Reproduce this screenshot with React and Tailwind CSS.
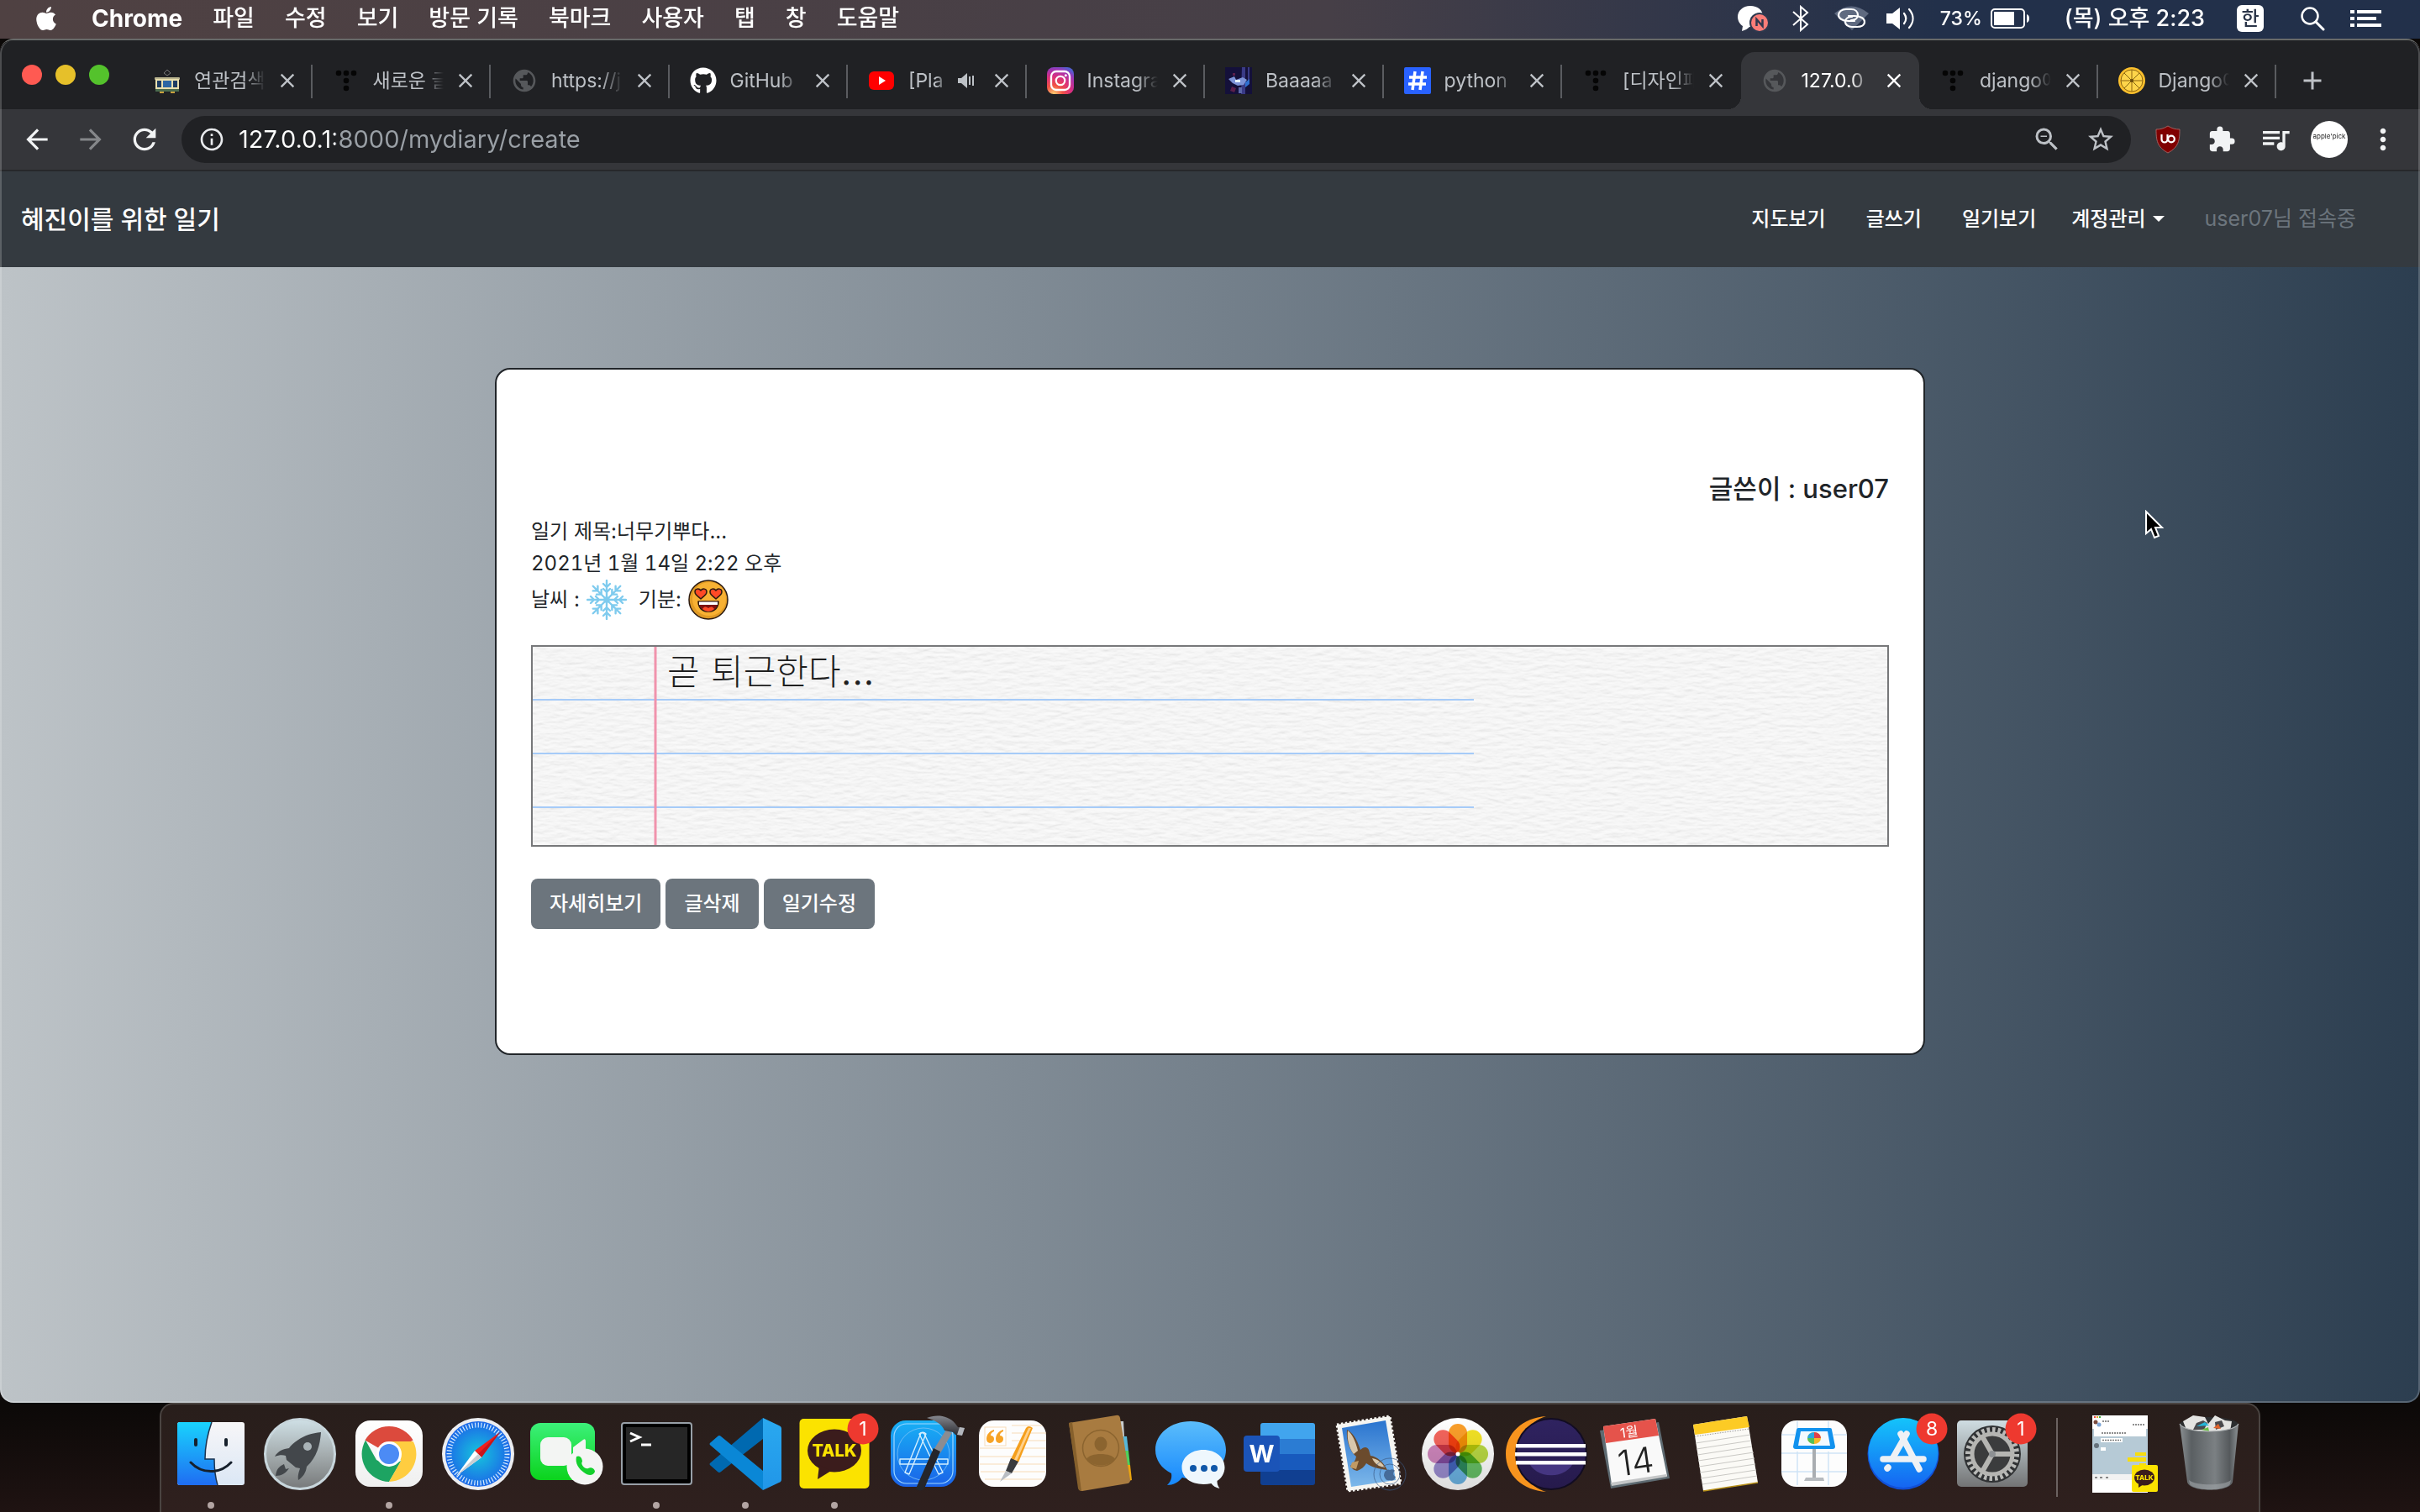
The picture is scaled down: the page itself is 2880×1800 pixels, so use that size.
import { FaApple, FaGithub } from 'react-icons/fa'
import {
  MdArrowBack, MdArrowForward, MdExtension, MdInfoOutline, MdMoreVert,
  MdPublic, MdQueueMusic, MdRefresh, MdStarBorder, MdZoomOut, MdClose, MdAdd,
} from 'react-icons/md'

/* ---------- Menu bar ---------- */

const MENUS = ['파일', '수정', '보기', '방문 기록', '북마크', '사용자', '탭', '창', '도움말']

function MenuBar() {
  return (
    <header className="flex h-[46px] items-center bg-linear-to-r from-[#4f4142] via-[#463f47] via-55% to-[#22304a] to-80% pb-0.5 pr-[46px] pl-[39px] text-[27px] font-medium text-white">
      <FaApple className="size-8" aria-label="Apple" />
      <nav className="ml-[38px] flex items-center gap-9">
        <button className="text-[28px] font-bold">Chrome</button>
        {MENUS.map((m) => (
          <button key={m}>{m}</button>
        ))}
      </nav>
      <div className="ml-auto flex items-center">
        {/* chat with red N */}
        <svg viewBox="0 0 38 32" className="mr-7 h-8 w-[38px]">
          <path d="M16 1C7 1 1 7 1 14c0 5 3 9 6 11l-1 6c4-1 7-3 9-5 14 0 16-6 16-12C31 6 25 1 16 1z" fill="#fff" />
          <circle cx="27" cy="21" r="12" fill="#2e394f" />
          <circle cx="27" cy="21" r="10" fill="#fb7d78" />
          <path d="M23.500 25v-8l7 8v-8" fill="none" stroke="#2e394f" strokeWidth="2.500" />
        </svg>
        {/* bluetooth */}
        <svg viewBox="0 0 20 32" className="mr-[30px] h-8 w-5">
          <path d="M1 8l17 15-8 7V2l8 7L1 24" fill="none" stroke="#fff" strokeWidth="2" />
        </svg>
        {/* linked hotspot */}
        <svg viewBox="0 0 42 30" className="mr-5 h-[30px] w-[42px]">
          <path d="M0 9Q20-8 41 9L21 29z" fill="#5f6a80" />
          <g fill="none" stroke="#fff" strokeWidth="2.200" strokeLinecap="round">
            <path d="M17 12h7c7 0 12 3 12 7s-4 6-9 6h-6c-5 0-8-3-8-6 0-4 4-6 8-6" />
            <path d="M24 18h-7c-7 0-12-3-12-7s4-7 9-7h6c5 0 8 3 8 7 0 4-4 6-8 6" />
          </g>
        </svg>
        {/* speaker */}
        <svg viewBox="0 0 34 28" className="mr-[30px] h-7 w-[34px]">
          <path d="M0 8h7l9-7v26l-9-7H0z" fill="#fff" />
          <g fill="none" stroke="#fff" strokeWidth="2.200" strokeLinecap="round">
            <path d="M21 8c3 4 3 8 0 12" />
            <path d="M27 3c6 7 6 15 0 22" />
          </g>
        </svg>
        <span className="text-[23px]">73%</span>
        <svg viewBox="0 0 47 26" className="ml-2.5 mr-[41px] h-[26px] w-[47px]">
          <rect x="1" y="2" width="39" height="22" rx="4" fill="none" stroke="#fff" strokeWidth="2" />
          <rect x="4" y="5" width="24" height="16" fill="#fff" />
          <path d="M43 8c4 1 4 9 0 10z" fill="#fff" />
        </svg>
        <span>(목) 오후 2:23</span>
        <span className="ml-[38px] mr-[43px] flex h-8 w-8 items-center justify-center rounded-md bg-white text-[23px] text-[#2a3448]">한</span>
        <svg viewBox="0 0 30 30" className="mr-[30px] size-[30px]">
          <circle cx="12" cy="12" r="9.500" fill="none" stroke="#fff" strokeWidth="2.500" />
          <path d="M19 19l9 9" stroke="#fff" strokeWidth="3" strokeLinecap="round" />
        </svg>
        <svg viewBox="0 0 37 22" className="h-[22px] w-[37px]" fill="#fff">
          <path d="M0 1h5v4H0zM8 1h29v4H8zM0 9h5v4H0zM8 9h23v4H8zM0 17h5v4H0zM8 17h29v4H8z" />
        </svg>
      </div>
    </header>
  )
}

/* ---------- Favicons ---------- */

function Tram() {
  return (
    <svg viewBox="0 0 32 32" className="size-8">
      <path d="M12 7l4-4 4 4-4 3z" fill="none" stroke="#777" strokeWidth="1" />
      <rect x="1" y="12" width="30" height="3" rx="1" fill="#b9b48f" />
      <rect x="2" y="14" width="28" height="13" fill="#e9dfae" />
      <rect x="4" y="16" width="5" height="8" fill="#1d3c63" />
      <rect x="11" y="16" width="10" height="8" fill="#2b66a4" />
      <rect x="23" y="16" width="5" height="8" fill="#1d3c63" />
      <rect x="2" y="26" width="28" height="3" fill="#4a6b4e" />
      <path d="M7 29h5v2H7zM20 29h5v2h-5z" fill="#c9a13d" />
    </svg>
  )
}

function Tistory() {
  return (
    <svg viewBox="0 0 32 32" className="size-8" fill="#050505">
      <circle cx="7" cy="7" r="3.300" />
      <circle cx="16" cy="7" r="3.300" />
      <circle cx="25" cy="7" r="3.300" />
      <circle cx="16" cy="16" r="3.300" />
      <circle cx="16" cy="25" r="3.300" />
    </svg>
  )
}

function Globe() {
  return <MdPublic className="size-8 text-[#56585b]" />
}

function YouTube() {
  return (
    <svg viewBox="0 0 32 32" className="size-8">
      <rect x="1" y="5" width="30" height="22" rx="6" fill="#f00" />
      <path d="M13 11l8 5-8 5z" fill="#fff" />
    </svg>
  )
}

function Instagram() {
  return (
    <svg viewBox="0 0 32 32" className="size-8">
      <defs>
        <radialGradient id="ig" cx="0.25" cy="1" r="1.100">
          <stop offset="0" stopColor="#fed373" />
          <stop offset="0.300" stopColor="#f15245" />
          <stop offset="0.600" stopColor="#d92e7f" />
          <stop offset="0.850" stopColor="#9b36b7" />
          <stop offset="1" stopColor="#515ecf" />
        </radialGradient>
      </defs>
      <rect width="32" height="32" rx="8" fill="url(#ig)" />
      <g fill="none" stroke="#fff" strokeWidth="2.300">
        <rect x="5" y="5" width="22" height="22" rx="6" />
        <circle cx="16" cy="16" r="5.200" />
      </g>
      <circle cx="22.300" cy="9.700" r="1.500" fill="#fff" />
    </svg>
  )
}

function Album() {
  return (
    <svg viewBox="0 0 32 32" className="size-8">
      <rect width="32" height="32" fill="#14103a" />
      <path d="M20 0h4v32h-5zM27 0h2v20h-2z" fill="#393a86" />
      <path d="M4 14l7-3 2 4 8-3 5 3-4 6-7 1-6-3z" fill="#7d93d8" />
      <path d="M12 15h6v3h-6z" fill="#e8f3ff" />
      <path d="M24 18l5-4v6l-5 4z" fill="#2f6fd0" />
      <path d="M8 23l5 2-2 5-5-2zM9 7h3v3H9z" fill="#5b1f4b" />
      <path d="M16 24h4v7h-4z" fill="#5b66a8" />
    </svg>
  )
}

function Hash() {
  return (
    <svg viewBox="0 0 32 32" className="size-8">
      <rect width="32" height="32" rx="2" fill="#2962ff" />
      <path d="M13 5l-3 22M22 5l-3 22M6 12h21M5 20h21" stroke="#fff" strokeWidth="3.500" />
    </svg>
  )
}

function Lemon() {
  return (
    <svg viewBox="0 0 32 32" className="size-8">
      <circle cx="16" cy="16" r="16" fill="#fbc02d" />
      <circle cx="16" cy="16" r="13" fill="#ffd54a" stroke="#8a6410" strokeWidth="1" />
      <path d="M16 3v26M3 16h26M7 7l18 18M25 7L7 25" stroke="#8a6410" strokeWidth="1" />
      <circle cx="16" cy="16" r="2" fill="#6a4c0c" />
    </svg>
  )
}

/* ---------- Browser chrome ---------- */

const TABS = [
  { title: '연관검색', icon: <Tram /> },
  { title: '새로운 글', icon: <Tistory /> },
  { title: 'https://j', icon: <Globe /> },
  { title: 'GitHub', icon: <FaGithub className="size-8 text-white" /> },
  { title: '[Pla', icon: <YouTube />, audio: true },
  { title: 'Instagra', icon: <Instagram /> },
  { title: 'Baaaaa', icon: <Album /> },
  { title: 'python', icon: <Hash /> },
  { title: '[디자인패', icon: <Tistory />, last: true },
  { title: '127.0.0', icon: <Globe />, active: true },
  { title: 'django에', icon: <Tistory /> },
  { title: 'Django에', icon: <Lemon /> },
]

function Tab({ title, icon, audio, active, last }) {
  return (
    <div
      className={
        active
          ? 'relative flex h-[68px] min-w-0 flex-1 items-center rounded-t-2xl bg-[#35363a] pr-4 pl-6 text-white'
          : 'relative flex h-[68px] min-w-0 flex-1 items-center pr-4 pl-6 text-[#bdc1c6]'
      }
    >
      {active && (
        <>
          <span className="absolute bottom-0 -left-4 size-4 bg-[radial-gradient(circle_at_0_0,transparent_16px,#35363a_16px)]" />
          <span className="absolute -right-4 bottom-0 size-4 bg-[radial-gradient(circle_at_100%_0,transparent_16px,#35363a_16px)]" />
        </>
      )}
      {!active && !last && <span className="absolute top-[15px] right-0 h-10 w-0.5 bg-[#5a5c60]" />}
      <span className="shrink-0">{icon}</span>
      <span className="ml-4 min-w-0 flex-1 overflow-hidden mask-r-from-70% text-[23px] whitespace-nowrap">{title}</span>
      {audio && (
        <svg viewBox="0 0 20 20" className="mr-1.5 ml-3 size-5 shrink-0" fill="#bdc1c6">
          <path d="M0 7h4l7-6v18l-7-6H0zM13 5h2v10h-2zM17 4h2v12h-2z" />
        </svg>
      )}
      <button aria-label="탭 닫기" className="ml-3 flex size-7 shrink-0 items-center justify-center">
        <MdClose className="size-7" />
      </button>
    </div>
  )
}

function TabStrip() {
  return (
    <div className="flex h-[82px] items-end bg-[#202124] pl-[26px]">
      <div className="mr-[29px] flex gap-4 self-center">
        <button aria-label="닫기" className="size-6 rounded-full bg-[#ff5a52]" />
        <button aria-label="최소화" className="size-6 rounded-full bg-[#e6c02a]" />
        <button aria-label="확대" className="size-6 rounded-full bg-[#54c22c]" />
      </div>
      <div className="flex min-w-0 max-w-[2550px] flex-1">
        {TABS.map((t, i) => (
          <Tab key={i} {...t} />
        ))}
      </div>
      <button aria-label="새 탭" className="ml-[25px] flex h-[68px] items-center text-[#bdc1c6]">
        <MdAdd className="size-9" />
      </button>
    </div>
  )
}

function Toolbar() {
  const cell = 'flex w-16 shrink-0 items-center justify-center text-[#f1f3f4]'
  return (
    <div className="flex h-[74px] items-center border-b-2 border-[#27282b] bg-[#35363a] px-3">
      <button aria-label="뒤로" className={cell}><MdArrowBack className="size-[38px]" /></button>
      <button aria-label="앞으로" className="flex w-16 shrink-0 items-center justify-center text-[#85878a]"><MdArrowForward className="size-[38px]" /></button>
      <button aria-label="새로고침" className={cell}><MdRefresh className="size-10" /></button>
      <div className="mx-3 flex h-14 min-w-0 flex-1 items-center rounded-full bg-[#202124] pr-[18px] pl-5">
        <MdInfoOutline className="size-8 shrink-0 text-[#e8eaed]" />
        <input
          aria-label="주소"
          defaultValue="127.0.0.1:8000/mydiary/create"
          className="ml-4 min-w-0 flex-1 bg-[linear-gradient(to_right,#fff_115px,#9aa0a6_115px)] bg-clip-text text-[29px] text-transparent outline-none"
        />
        <button aria-label="축소"><MdZoomOut className="size-9 text-[#bdc1c6]" /></button>
        <button aria-label="북마크 추가" className="ml-7"><MdStarBorder className="size-9 text-[#bdc1c6]" /></button>
      </div>
      <button aria-label="uBlock Origin" className={cell}>
        <svg viewBox="0 0 32 34" className="h-[34px] w-8">
          <path d="M16 1c5 3 9 4 14 4 0 13-1 21-14 28C3 26 2 18 2 5c5 0 9-1 14-4z" fill="#800000" stroke="#a06060" strokeWidth="1" />
          <path d="M8.500 11v6a3.500 3.500 0 0 0 7 0v-6" fill="none" stroke="#fff" strokeWidth="2.200" />
          <circle cx="20" cy="16.500" r="3.800" fill="none" stroke="#fff" strokeWidth="2.200" />
        </svg>
      </button>
      <button aria-label="확장 프로그램" className={cell}><MdExtension className="size-[34px]" /></button>
      <button aria-label="미디어 제어" className={cell}><MdQueueMusic className="size-10" /></button>
      <button aria-label="프로필" className={cell}>
        <span className="flex size-11 items-start justify-center rounded-full bg-white pt-3 text-[8px] text-[#222]">apple'pick</span>
      </button>
      <button aria-label="메뉴" className={cell}><MdMoreVert className="size-10" /></button>
    </div>
  )
}

/* ---------- Diary page ---------- */

function SiteNav() {
  return (
    <nav className="flex h-[114px] items-center bg-[#343a40] pr-[76px] pl-[25px] text-2xl font-medium text-white">
      <a href="#home" className="text-3xl">혜진이를 위한 일기</a>
      <div className="ml-auto flex items-center">
        <a href="#map" className="mr-12">지도보기</a>
        <a href="#write" className="mr-12">글쓰기</a>
        <a href="#diary" className="mr-[42px]">일기보기</a>
        <button className="mr-12 flex items-center gap-2">
          계정관리
          <span className="border-x-[7px] border-t-[7px] border-x-transparent border-t-white" />
        </button>
        <span className="text-[25px] font-normal text-[#6c757d]">user07님 접속중</span>
      </div>
    </nav>
  )
}

function Snowflake() {
  return (
    <svg viewBox="0 0 48 48" className="size-12" fill="none" stroke="#7fcbee" strokeWidth="2.400" strokeLinecap="round">
      {[0, 45, 90, 135, 180, 225, 270, 315].map((a) => (
        <path key={a} d="M24 24V1M24 15l-4-4M24 15l4-4M24 9l-4-4M24 9l4-4" transform={`rotate(${a} 24 24)`} />
      ))}
      <circle cx="24" cy="24" r="2.500" fill="#7fcbee" />
    </svg>
  )
}

function HeartEyes() {
  return (
    <svg viewBox="0 0 48 48" className="size-12" stroke="#2b1a10" strokeWidth="1.500" strokeLinejoin="round">
      <circle cx="24" cy="24" r="23" fill="#e09a24" />
      <circle cx="25" cy="23" r="20" fill="#f8b133" stroke="none" />
      <path d="M15 23C9 18 8 17 8 14.500c0-4 5-4.500 7-1.500 2-3 7-2.500 7 1.500 0 2.500-1 3.500-7 8.500z" fill="#ff4a26" />
      <path d="M33 23c-6-5-7-6-7-8.500 0-4 5-4.500 7-1.500 2-3 7-2.500 7 1.500 0 2.500-1 3.500-7 8.500z" fill="#ff4a26" />
      <path d="M12 26h24c0 7-4 12-12 12s-12-5-12-12z" fill="#7d1210" />
      <path d="M13 26.500h22v3.500H13z" fill="#fff" stroke="none" />
      <path d="M17 35c3-4 5-2 7-1 2-1 4-3 7 1-4 4-10 4-14 0z" fill="#ff4a26" stroke="none" />
    </svg>
  )
}

// Lined notebook sheet with a grainy paper fill
function Paper({ children }) {
  return (
    <div className="relative mt-[30px] h-60 overflow-hidden border-2 border-[#77787a] bg-[#f0f0f0]">
      <svg className="absolute inset-0 size-full" aria-hidden="true">
        <filter id="grain" x="0" y="0" width="100%" height="100%">
          <feTurbulence type="fractalNoise" baseFrequency="0.060 0.200" numOctaves="4" seed="7" result="n" />
          <feDiffuseLighting in="n" surfaceScale="0.700" lightingColor="#fafafa">
            <feDistantLight azimuth="270" elevation="72" />
          </feDiffuseLighting>
        </filter>
        <rect width="100%" height="100%" filter="url(#grain)" />
        <g stroke="#a6cbf8" strokeWidth="2">
          <path d="M0 63h1120M0 127h1120M0 191h1120" />
        </g>
        <path d="M146 0v240" stroke="#f093ac" strokeWidth="3" />
      </svg>
      <p className="relative pl-[160px] font-['DejaVu_Serif','Noto_Sans_CJK_KR',serif] text-[42px] leading-[62px] font-light text-[#1f1f1f]">
        {children}
      </p>
    </div>
  )
}

function DiaryCard() {
  const btn = 'h-[60px] rounded-lg bg-[#6c757d] px-[22px] text-2xl font-medium text-white'
  return (
    <article className="mx-auto w-full max-w-[1702px] rounded-[18px] border-2 border-[#212529] bg-white px-[41px] pt-[124px] pb-[148px] text-2xl leading-[38px] text-[#212529]">
      <h2 className="mb-3.5 text-right text-[31px] leading-9 font-medium">글쓴이 : user07</h2>
      <p>일기 제목:너무기뿌다...</p>
      <p className="tabular-nums">2021년 1월 14일 2:22 오후</p>
      <div className="flex h-12 items-center">
        <span className="mr-2">날씨 :</span>
        <Snowflake />
        <span className="mr-2 ml-3.5">기분:</span>
        <HeartEyes />
      </div>
      <Paper>곧 퇴근한다...</Paper>
      <div className="mt-[38px] flex gap-1.5">
        <button className={btn}>자세히보기</button>
        <button className={btn}>글삭제</button>
        <button className={btn}>일기수정</button>
      </div>
    </article>
  )
}

/* ---------- Dock ---------- */

function Gradient({ id, from, to, mid }) {
  return (
    <linearGradient id={id} x1="0" y1="0" x2="0" y2="1">
      <stop offset="0" stopColor={from} />
      {mid && <stop offset="0.500" stopColor={mid} />}
      <stop offset="1" stopColor={to} />
    </linearGradient>
  )
}

function Finder() {
  return (
    <>
      <Gradient id="fd" from="#19d3fd" to="#1f6df2" />
      <Gradient id="fw" from="#f7f6f8" to="#dbe7f5" />
      <rect x="13" y="15" width="80" height="75" rx="3" fill="url(#fw)" />
      <path d="M16 15h38c-5 14-8 29-8 44h11c0 11 1 21 4 31H16a3 3 0 0 1-3-3V18a3 3 0 0 1 3-3z" fill="url(#fd)" />
      <path d="M54 15c-5 14-8 29-8 44h11c0 11 1 21 4 31" fill="none" stroke="#1b3350" strokeWidth="1.500" />
      <g fill="none" stroke="#16202c" strokeLinecap="round">
        <path d="M35 36v6M71 36v6" strokeWidth="4" />
        <path d="M29 63c13 14 35 14 48 0" strokeWidth="3" />
      </g>
    </>
  )
}

function Launchpad() {
  return (
    <>
      <Gradient id="lp" from="#cfe0e6" mid="#a5adaf" to="#77797a" />
      <circle cx="53" cy="53" r="41.500" fill="url(#lp)" stroke="#c8d6dc" strokeWidth="3" />
      <g fill="#43474b">
        <path d="M78 27c-11 1-20 4-27 9-5 3-9 7-11 10-7 1-13 3-17 10 5-2 10-2 13-1l1 5 11 9 5 1c-1 4-3 8-2 14 6-4 9-9 10-16 12-11 16-26 17-41z" />
        <path d="M34 65c-7 3-9 7-10 14 7 0 12-3 16-9l-4 1z" />
      </g>
      <circle cx="62" cy="44" r="5" fill="#a9b3b7" />
    </>
  )
}

function Chrome() {
  return (
    <>
      <Gradient id="chbg" from="#ffffff" to="#efefef" />
      <rect x="13" y="13" width="80" height="79" rx="18" fill="url(#chbg)" />
      <path d="M53 53L24.400 36.500A33 33 0 0 1 81.600 36.500z" fill="#dc4a3d" />
      <path d="M25 36.500A33 33 0 0 0 53 86l14.500-25L53 68 38 60z" fill="#1da462" />
      <path d="M53 38h28.800A33 33 0 0 1 53 86l14.300-25z" fill="#ffcd40" />
      <circle cx="53" cy="53" r="15" fill="#fff" />
      <circle cx="53" cy="53" r="12" fill="#4c8bf5" />
    </>
  )
}

function Safari() {
  return (
    <>
      <radialGradient id="sf">
        <stop offset="0" stopColor="#16c5dc" />
        <stop offset="1" stopColor="#1c68e8" />
      </radialGradient>
      <circle cx="53" cy="53" r="43" fill="#ecedf0" />
      <circle cx="53" cy="53" r="39" fill="url(#sf)" />
      <circle cx="53" cy="53" r="34.500" fill="none" stroke="#d8ecff" strokeWidth="6" strokeDasharray="1.200 2.400" />
      <path d="M79 27L57 57l-8-8z" fill="#f0201c" />
      <path d="M79 27L57 57l-4-4z" fill="#c8151a" />
      <path d="M27 79l22-30 8 8z" fill="#fff" />
      <path d="M27 79l26-26 4 4z" fill="#c9cdd2" />
    </>
  )
}

function FaceTime() {
  return (
    <>
      <Gradient id="ft" from="#3cf07a" to="#0bd31c" />
      <rect x="9" y="16" width="77" height="68" rx="12" fill="url(#ft)" />
      <rect x="21" y="33" width="37" height="34" rx="9" fill="#f3f5f3" />
      <path d="M60 45l12-9q3-2 3 2v24q0 4-3 2l-12-9z" fill="#f3f5f3" />
      <circle cx="74" cy="68" r="21.500" fill="#f4f5f4" />
      <path d="M64 56c4-2 7 2 7 6-3 3 4 10 7 8 4-2 8 1 8 4-2 5-8 5-13 1-6-4-11-11-9-19z" fill="#14d02d" />
    </>
  )
}

function Terminal() {
  return (
    <>
      <rect x="12" y="16" width="83" height="73" rx="3" fill="#000" stroke="#98a0a8" strokeWidth="2" />
      <rect x="17" y="21" width="73" height="62" fill="#262626" />
      <path d="M22 28l11 5-11 5M35 42h12" fill="none" stroke="#fff" strokeWidth="3" />
    </>
  )
}

function VsCode() {
  return (
    <>
      <Gradient id="vs" from="#2aa9f0" to="#2196e8" />
      <path d="M74 10v25L24 74q-2 2-4 0l-8-7q-3-2 0-4z" fill="#0069b0" />
      <path d="M12 39l8-7q2-2 4 0l50 41v23L12 43q-3-2 0-4z" fill="#0a87d6" />
      <path d="M74 10l19 9q3 1 3 4v60q0 3-3 4l-19 9z" fill="url(#vs)" />
    </>
  )
}

function Talk({ badge }) {
  return (
    <>
      <rect x="11.500" y="11" width="83" height="83" rx="5" fill="#fbe300" />
      <ellipse cx="53" cy="49" rx="32" ry="25.500" fill="#3b1c1c" />
      <path d="M35 66l-2 17 16-10z" fill="#3b1c1c" />
      <text x="53" y="56" textAnchor="middle" fontSize="20" fontWeight="800" fill="#fbe300">TALK</text>
      {badge}
    </>
  )
}

function Xcode() {
  return (
    <>
      <Gradient id="xc" from="#18b1f5" to="#1a62e8" />
      <Gradient id="hm" from="#85878e" to="#2a2b31" />
      <rect x="14" y="13" width="78" height="79" rx="18" fill="url(#xc)" />
      <rect x="18" y="17" width="70" height="71" rx="15" fill="none" stroke="#9fd8ff" strokeWidth="1.200" />
      <circle cx="53" cy="53" r="31" fill="none" stroke="#7cc4f8" strokeWidth="0.800" />
      <g fill="none" stroke="#d4efff" strokeWidth="1.400" strokeLinejoin="round">
        <path d="M25 59h57v6H25z" />
        <path d="M50 28q3-2 6 1L36 77l-5-2z" />
        <path d="M48 29q3-3 6 0l22 46-5 2z" />
      </g>
      <path d="M80 24l7 4-14 24-8-4z" fill="#8a8c92" />
      <path d="M65 46l8 4-19 44q-5 5-10 0z" fill="#25262b" />
      <path d="M57 10c10-4 25-4 34 7l3 4 8 1-3 9-8-1-3-3-10-2c-3-8-11-12-21-15z" fill="url(#hm)" />
      <path d="M96 21l6 1-3 9-6-1z" fill="#b3b6bc" />
    </>
  )
}

function Pages() {
  return (
    <>
      <rect x="13" y="13" width="80" height="79" rx="18" fill="#fdfdfd" />
      <path d="M52 19h36M52 28h41M52 37h41M14 46h79M14 56h79M14 65h79M15 74h77M20 83h68" stroke="#f7dcb8" strokeWidth="1.200" />
      <rect x="20" y="21" width="25" height="22" fill="#fff" stroke="#f7dcb8" />
      <path d="M31 24c-6 2-9 6-9 11 0 7 9 6 9 0 0-3-2-4-4-4 0-3 2-4 4-5zM42 24c-6 2-9 6-9 11 0 7 9 6 9 0 0-3-2-4-4-4 0-3 2-4 4-5z" fill="#f7a325" />
      <path d="M69 22q3-4 8 0L60 63l-9-4z" fill="#f59f1c" />
      <path d="M72 22l3 0-17 39-3-1z" fill="#ffd089" />
      <path d="M51 58l9 4-8 14-7-3z" fill="#3a3b3e" />
      <path d="M45 73l7 3-14 10z" fill="#b9bdc2" />
    </>
  )
}

function Contacts() {
  return (
    <>
      <path d="M74 14h5l1 18h-5z" fill="#c8ccce" />
      <path d="M77 32h6l2 18h-6z" fill="#57b7d9" />
      <path d="M79 49h6l2 18h-7z" fill="#4fd05c" />
      <path d="M81 66h6l2 18-7 2z" fill="#eba50e" />
      <path d="M14 16l56-9q4-1 5 3l12 74q0 3-3 4l-54 9q-3 0-4-3L14 16z" fill="#a87b40" />
      <path d="M14 16l4-1 11 82q-3 0-4-3z" fill="#86602c" />
      <circle cx="52" cy="46" r="21.500" fill="none" stroke="#8b642f" strokeWidth="1.500" />
      <ellipse cx="52" cy="41" rx="7.500" ry="8.500" fill="#8b642f" />
      <path d="M35 59c4-8 30-8 34 0-8 10-26 10-34 0z" fill="#8b642f" />
    </>
  )
}

function Messages() {
  return (
    <>
      <Gradient id="ms" from="#5bbdfb" to="#1688fd" />
      <path d="M53 14c24 0 42 15 42 34S77 82 53 82c-4 0-7 0-10-1-5 6-11 9-18 9 4-4 6-8 5-14C18 70 11 60 11 48c0-19 18-34 42-34z" fill="url(#ms)" />
      <path d="M68 48c15 0 25.500 9 25.500 21 0 7-4 13-9 16 0 4 1 6 3 9-5-1-8-3-10-6-20 4-35-5-35-19 0-12 11-21 25.500-21z" fill="#eef7fd" />
      <g fill="#0f57a8">
        <circle cx="56" cy="70" r="4" />
        <circle cx="69" cy="70" r="4" />
        <circle cx="81" cy="70" r="4" />
      </g>
    </>
  )
}

function Word() {
  return (
    <>
      <path d="M33 16h59q3 0 3 3v16H30V19q0-3 3-3z" fill="#41a5ee" />
      <path d="M30 35h65v18H30z" fill="#2b7cd3" />
      <path d="M30 53h65v19H30z" fill="#185abd" />
      <path d="M30 72h65v15q0 3-3 3H33q-3 0-3-3z" fill="#103f91" />
      <rect x="10" y="31" width="43" height="43" rx="4" fill="#1b54b8" />
      <text x="31.500" y="63" textAnchor="middle" fontSize="29" fontWeight="700" fill="#fff">W</text>
    </>
  )
}

function Mail() {
  return (
    <>
      <Gradient id="ml" from="#2a74cf" to="#7db8ea" />
      <path d="M15 18l63-10 13 80-63 9z" fill="#f6f5f1" stroke="#f6f5f1" strokeWidth="3" strokeDasharray="2.500 2.500" />
      <path d="M21 22l52-9 12 71-53 8z" fill="url(#ml)" />
      <path d="M27 24c6 3 11 9 16 24 4-4 8-4 10 0l2 7c8 1 15 7 20 17-9-1-18-3-25-8-3 5-6 7-11 9-5-1-6-3-8-6 4-3 6-6 7-11-8-7-12-19-11-32z" fill="#6b4b2d" />
      <path d="M28 25c5 4 9 12 12 24l-5 4c-6-8-8-18-7-28zM57 58c6 1 12 5 15 11-7-1-12-4-15-11z" fill="#d9c8ac" />
      <path d="M33 63l8-2-3 10-7-2z" fill="#c19a64" />
      <g fill="none" stroke="#3c5b86" strokeWidth="1" opacity="0.700">
        <circle cx="78" cy="77" r="19" />
        <circle cx="78" cy="77" r="12" />
      </g>
      <path d="M78 72c3-2 6 0 6 1-3 2-2 6 1 7-2 5-4 5-7 4-3 1-5 0-7-5 0-6 4-9 7-7z" fill="#3c5b86" opacity="0.800" />
    </>
  )
}

const PETALS = ['#fb9f2a', '#f3e325', '#b9d944', '#66bf66', '#6cb4e4', '#9a8ccf', '#cf86bd', '#f5655c']

function Photos() {
  return (
    <>
      <Gradient id="ph" from="#ffffff" to="#dcdcdc" />
      <circle cx="53" cy="53" r="43" fill="url(#ph)" />
      {PETALS.map((c, i) => (
        <rect key={c} x="42" y="17" width="22" height="35" rx="11" fill={c} className="mix-blend-multiply" transform={`rotate(${i * 45} 53 53)`} />
      ))}
      <circle cx="53" cy="53" r="2.500" fill="#fff" />
    </>
  )
}

function Eclipse() {
  return (
    <>
      <Gradient id="ec" from="#2f2360" to="#261a4c" />
      <path d="M52 8C24 10 4 28 4 53s20 43 48 45C32 92 20 74 20 53S32 14 52 8z" fill="#f7941e" />
      <circle cx="58" cy="53" r="43" fill="#120c22" />
      <circle cx="58" cy="53" r="41" fill="url(#ec)" />
      <path d="M31 62h54a28 22 0 0 1-54 0z" fill="#453681" />
      <path d="M16 41h83v4.500H16zM15 51h85v4.500H15zM16 61h83v4.500H16z" fill="#fff" />
    </>
  )
}

function Calendar() {
  return (
    <>
      <path d="M10 25l70-10 13 67-70 12z" fill="#5e6b72" />
      <path d="M14 20l62-9 14 68-66 10z" fill="#f9f9f9" />
      <path d="M14 20l62-9 4 20-63 9z" fill="#e5534b" />
      <path d="M23 87l66-10 1 3-66 11z" fill="#c4c6c7" />
      <g transform="rotate(-8 50 50)" textAnchor="middle">
        <text x="48" y="32" fontSize="16" fill="#fff">1월</text>
        <text x="51" y="77" fontSize="42" fontWeight="300" fill="#222">14</text>
      </g>
    </>
  )
}

function Notes() {
  return (
    <>
      <path d="M15 18l64-10 13 79-65 10z" fill="#fbfaf6" />
      <path d="M15 18l64-10 3 13-65 9z" fill="#fccb25" />
      <path d="M27 97l65-10" stroke="#b78f16" strokeWidth="1.500" />
      <path d="M17 32l65-9" stroke="#999" strokeWidth="1" strokeDasharray="1.500 1.500" />
      <path d="M18 40l65-10M19 47l65-10M20 54l65-10M21 61l66-10M22 68l66-10M23 75l66-10M24 82l66-10M26 89l65-10" stroke="#c9c8c4" strokeWidth="1" />
    </>
  )
}

function Keynote() {
  return (
    <>
      <rect x="14" y="13" width="78" height="79" rx="18" fill="#fdfdfd" />
      <path d="M14 30h16M76 30h16M14 52h78M14 74h78M33 50v40M70 50v40M33 14v8M70 14v8" stroke="#cfe4f6" strokeWidth="1.500" fill="none" />
      <path d="M34 22h38q2 0 2 2l4 20q0 3-3 3H31q-3 0-3-3l4-20q0-2 2-2z" fill="#1292ee" />
      <path d="M37 26h32l3 17H34z" fill="#f3faff" />
      <ellipse cx="53" cy="34" rx="8" ry="7" fill="#f6b92b" />
      <path d="M53 27a8 7 0 0 0-8 7l8 0z" fill="#29a8e0" />
      <path d="M45 34a8 7 0 0 0 8 7v-7z" fill="#53c15b" />
      <path d="M53 27a8 7 0 0 1 8 7h-8z" fill="#e0404a" />
      <path d="M51 47h4v34h-4z" fill="#a9adb1" />
      <path d="M43 81h21l1 4H41z" fill="#b7bbbf" />
    </>
  )
}

function AppStore({ badge }) {
  return (
    <>
      <Gradient id="as" from="#14c4fb" to="#1565f2" />
      <circle cx="53" cy="53" r="42.500" fill="#1150d8" />
      <circle cx="53" cy="51.500" r="41.500" fill="url(#as)" />
      <g stroke="#eef1f5" strokeWidth="7.500" strokeLinecap="round">
        <path d="M29 59h48" />
        <path d="M57 29L41 57" />
        <path d="M50 29l22 42" />
        <path d="M35 69l-1 1" />
      </g>
      {badge}
    </>
  )
}

function Preferences({ badge }) {
  return (
    <>
      <Gradient id="pf" from="#cfdde2" to="#737475" />
      <rect x="11" y="13" width="84" height="79" rx="5" fill="url(#pf)" />
      <circle cx="53" cy="53" r="34" fill="#303234" />
      <circle cx="53" cy="53" r="29" fill="none" stroke="#b9bab8" strokeWidth="6" strokeDasharray="3.500 3" />
      <circle cx="53" cy="53" r="24" fill="#3b3c3d" stroke="#b5b5b2" strokeWidth="5" />
      <path d="M53 53L41 32M53 53h24M53 53L41 74" stroke="#b5b5b2" strokeWidth="6" />
      <circle cx="53" cy="53" r="4" fill="#8d9093" />
      {badge}
    </>
  )
}

function TalkWindow() {
  return (
    <>
      <rect x="18" y="7" width="66" height="92" fill="#fff" />
      <rect x="18" y="23" width="66" height="54" fill="#b6cad6" />
      <rect x="18" y="77" width="66" height="7" fill="#f2f2f2" />
      <rect x="20" y="23" width="62" height="9" fill="#fff" />
      <path d="M20 8h2v2h-2z" fill="#ee4a3c" />
      <path d="M23 8h2v2h-2z" fill="#e9a626" />
      <path d="M26 8h2v2h-2z" fill="#42b340" />
      <circle cx="22" cy="15" r="2.500" fill="#7a4b3e" />
      <circle cx="26" cy="18" r="2.500" fill="#7fa6d6" />
      <path d="M30 14h8M29 28h30M66 18h14" stroke="#6b6b6b" strokeWidth="1.500" strokeDasharray="2 1" />
      <path d="M28 34h26v5H28zM28 45h6v4h-6z" fill="#fff" />
      <path d="M30 36.500h22" stroke="#777" strokeWidth="1.500" strokeDasharray="2 1" />
      <circle cx="23" cy="43" r="3" fill="#66727c" />
      <path d="M69 51h13v4H69zM60 57h22v5H60zM74 64h8v4h-8z" fill="#f7dd0d" />
      <path d="M21 81h3M27 81h3M34 81h3" stroke="#888" strokeWidth="2" />
      <rect x="65" y="66" width="31" height="32" rx="2" fill="#fbe300" />
      <ellipse cx="80" cy="81" rx="12" ry="9.500" fill="#3b1c1c" />
      <path d="M73 87v6l6-4z" fill="#3b1c1c" />
      <text x="80" y="84" textAnchor="middle" fontSize="8" fontWeight="800" fill="#fbe300">TALK</text>
    </>
  )
}

function Trash() {
  return (
    <>
      <linearGradient id="tr" x1="0" x2="1" y1="0" y2="0">
        <stop offset="0" stopColor="#8b9093" />
        <stop offset="0.200" stopColor="#5a5f62" />
        <stop offset="0.600" stopColor="#7b8083" />
        <stop offset="0.850" stopColor="#55595c" />
        <stop offset="1" stopColor="#8d9295" />
      </linearGradient>
      <ellipse cx="51" cy="18" rx="35" ry="9" fill="#2c2e30" />
      <path d="M20 14l12-7 14 2 4 8 8-10 12 6 8 1-2 12-50 3z" fill="#e4e4e2" />
      <path d="M36 16l8-3 5 3-4 8H32zM58 15l8-2 3 7-10 4z" fill="#4a4a4d" />
      <path d="M36 20l10-5 5 4z" fill="#25b6d8" />
      <path d="M56 22l6-5 3 6z" fill="#e0642c" />
      <path d="M42 24l8-3 1 5z" fill="#6cbf45" />
      <path d="M16 17c6 12 64 12 70 0l-7 69c-2 13-52 13-54 0z" fill="url(#tr)" />
      <path d="M27 84c8 7 42 7 50 0l-1 5c-6 8-42 8-48 0z" fill="#a0a5a8" opacity="0.600" />
      <path d="M16 17c6 12 64 12 70 0" fill="none" stroke="#b0b4b6" strokeWidth="1.200" />
    </>
  )
}

function Badge({ n }) {
  return (
    <>
      <circle cx="87" cy="23" r="18.500" fill="#ee392f" />
      <text x="87" y="31" textAnchor="middle" fontSize="23" fill="#fff">{n}</text>
    </>
  )
}

const APPS = [
  { name: 'Finder', icon: <Finder />, open: true },
  { name: 'Launchpad', icon: <Launchpad /> },
  { name: 'Chrome', icon: <Chrome />, open: true },
  { name: 'Safari', icon: <Safari /> },
  { name: 'FaceTime', icon: <FaceTime /> },
  { name: 'Terminal', icon: <Terminal />, open: true },
  { name: 'Code', icon: <VsCode />, open: true },
  { name: 'KakaoTalk', icon: <Talk badge={<Badge n="1" />} />, open: true },
  { name: 'Xcode', icon: <Xcode /> },
  { name: 'Pages', icon: <Pages /> },
  { name: 'Contacts', icon: <Contacts /> },
  { name: 'Messages', icon: <Messages /> },
  { name: 'Word', icon: <Word /> },
  { name: 'Mail', icon: <Mail /> },
  { name: 'Photos', icon: <Photos /> },
  { name: 'Eclipse', icon: <Eclipse /> },
  { name: 'Calendar', icon: <Calendar /> },
  { name: 'Notes', icon: <Notes /> },
  { name: 'Keynote', icon: <Keynote /> },
  { name: 'App Store', icon: <AppStore badge={<Badge n="8" />} /> },
  { name: 'Preferences', icon: <Preferences badge={<Badge n="1" />} /> },
]

function DockItem({ name, icon, open }) {
  return (
    <button aria-label={name} className="flex w-[106px] flex-col items-center">
      <svg viewBox="0 0 106 106" className="size-[106px]">{icon}</svg>
      {open && <span className="mt-1 size-2 rounded-full bg-[#b3a5a3]" />}
    </button>
  )
}

function Dock() {
  return (
    <footer className="mx-auto flex h-[130px] items-start rounded-t-2xl border-2 border-b-0 border-[#4a4441] bg-linear-to-b from-[#281e1b] to-[#2f201e] pt-1.5 pr-1 pl-1.5">
      {APPS.map((a) => (
        <DockItem key={a.name} {...a} />
      ))}
      <span className="mx-[23px] mt-2.5 h-[94px] w-0.5 bg-[#6b6260]" />
      <DockItem name="KakaoTalk 창" icon={<TalkWindow />} />
      <DockItem name="휴지통" icon={<Trash />} />
    </footer>
  )
}

export default function App() {
  return (
    <div className="relative flex min-h-screen flex-col bg-linear-to-b from-[#0c0908] from-93% to-[#1f1312] font-['Inter','Noto_Sans_CJK_KR',sans-serif]">
      <MenuBar />
      <div className="relative flex flex-1 flex-col overflow-hidden rounded-2xl border-t-2 border-[#686a69]">
        <TabStrip />
        <Toolbar />
        <SiteNav />
        <main className="flex-1 bg-linear-to-r/srgb from-[#bdc3c7] to-[#2c3e50] px-6 py-[120px]">
          <DiaryCard />
        </main>
        <div className="pointer-events-none absolute inset-0 rounded-2xl border-2 border-t-0 border-white/20" />
      </div>
      <Dock />
      {/* mouse pointer */}
      <svg viewBox="0 0 24 36" className="absolute top-[607px] left-[2552px] h-9 w-6">
        <path d="M2 2v26l6-5 4 10 5-2-4-10h8z" fill="#000" stroke="#fff" strokeWidth="2" />
      </svg>
    </div>
  )
}
